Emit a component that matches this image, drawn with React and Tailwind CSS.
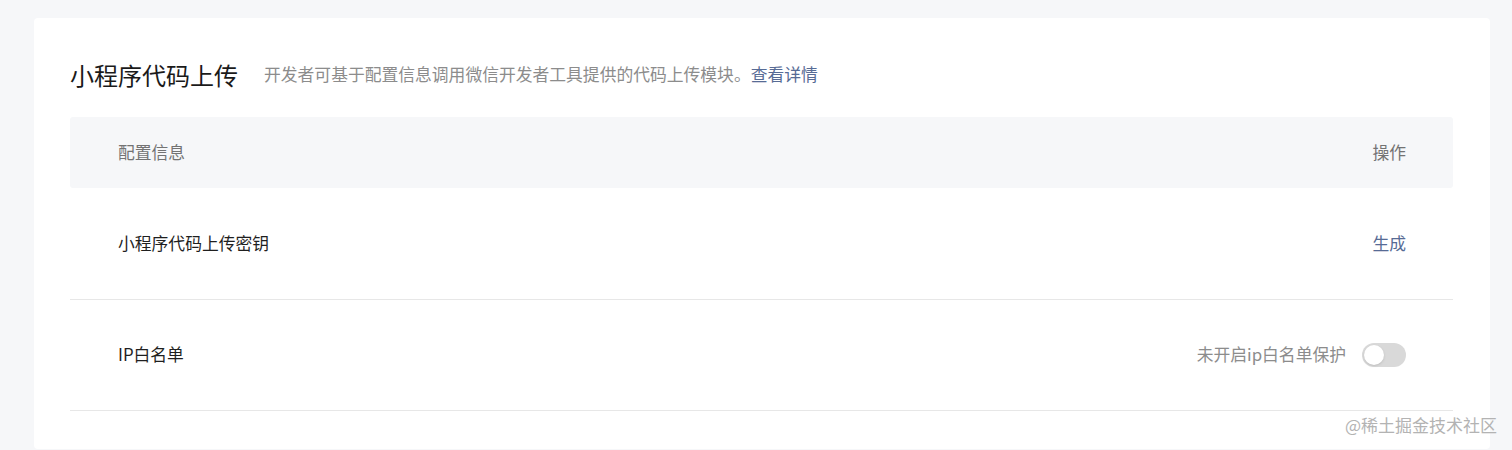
import React, { useState } from "react";

const FONT = { fontFamily: '"Noto Sans CJK SC", "Noto Sans", sans-serif' };

const Toggle = ({ on, onChange }) => (
  <button
    onClick={() => onChange(!on)}
    className={`relative w-[44px] h-[24px] rounded-full transition ${on ? "bg-[#07c160]" : "bg-[#d9d9d9]"}`}
    aria-label="IP白名单开关"
  >
    <span
      className={`absolute top-[2px] w-[20px] h-[20px] rounded-full bg-white shadow-sm transition-all ${on ? "left-[22px]" : "left-[2px]"}`}
    />
  </button>
);

export default function App() {
  const [ipOn, setIpOn] = useState(false);

  return (
    <div className="w-[1512px] h-[450px] bg-[#f6f7f9] pt-[18px] pl-[34px] relative" style={FONT}>
      <div className="w-[1456px] h-[431px] bg-white rounded-[4px] px-[36px] pt-[37px]">
        <div className="flex items-center h-[40px]">
          <h2 className="text-[24px] leading-[40px] text-[#1a1a1a] font-normal">小程序代码上传</h2>
          <p className="ml-[26px] text-[16.8px] text-[#8c8c8c]">
            开发者可基于配置信息调用微信开发者工具提供的代码上传模块。
            <a className="text-[#576b95] cursor-pointer">查看详情</a>
          </p>
        </div>

        <div className="mt-[22px] w-[1383px]">
          <div className="h-[71px] bg-[#f6f7f9] rounded-[3px] flex items-center justify-between pl-[48px] pr-[47px] text-[16.8px] text-[#737373]">
            <span>配置信息</span>
            <span>操作</span>
          </div>

          <div className="h-[112px] border-b border-[#e7e7e7] flex items-center justify-between pl-[48px] pr-[47px] text-[16.8px]">
            <span className="text-[#1f1f1f]">小程序代码上传密钥</span>
            <a className="text-[#576b95] cursor-pointer">生成</a>
          </div>

          <div className="h-[111px] border-b border-[#e7e7e7] flex items-center justify-between pl-[48px] pr-[47px] text-[16.8px]">
            <span className="text-[#1f1f1f]">IP白名单</span>
            <div className="flex items-center gap-[16px]">
              <span className="text-[#8c8c8c]">{ipOn ? "已开启ip白名单保护" : "未开启ip白名单保护"}</span>
              <Toggle on={ipOn} onChange={setIpOn} />
            </div>
          </div>
        </div>
      </div>

      <span className="absolute right-[15px] top-[412px] text-[17px] text-[#b3b3b3] pointer-events-none">@稀土掘金技术社区</span>
    </div>
  );
}
